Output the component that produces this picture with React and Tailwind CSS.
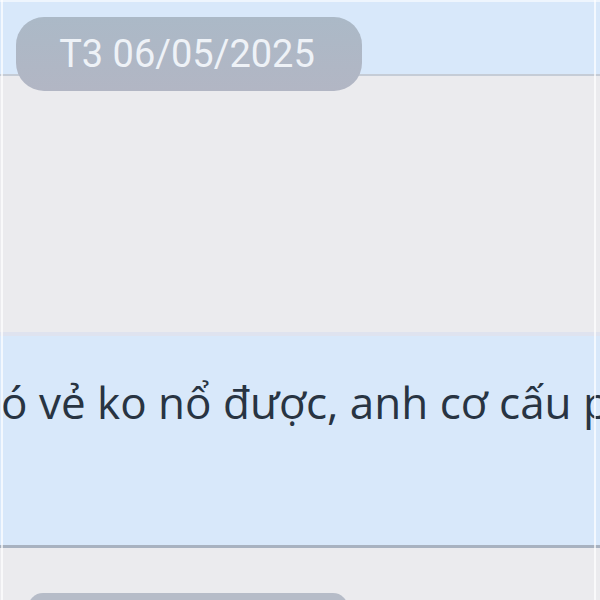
export default function App() {
  return (
    <div className="w-[600px] h-[600px] overflow-hidden relative bg-[#ebebee] flex flex-col" style={{ fontFamily: '"Open Sans", "Noto Sans", sans-serif' }}>
      <div className="h-[76px] shrink-0 bg-[#d8e8fa] border-t-2 border-t-[#eef5fd] border-b-2 border-b-[#c5ccd6]" />
      <div className="h-[256px] shrink-0 bg-[#ebebee]" />
      <div className="h-[216px] shrink-0 bg-[#d8e8fa] border-t-4 border-t-[#dfe3ef] border-b-[3px] border-b-[#a8b2c0] flex items-start pt-[42px] overflow-hidden">
        <span className="whitespace-nowrap text-[44px] leading-[48px] text-[#283442] ml-[1px]">ó vẻ ko nổ được, anh cơ cấu phải</span>
      </div>
      <div className="h-[52px] shrink-0 bg-[#ebebee] pt-[45px] pl-[28px]">
        <div className="w-[320px] h-[30px] rounded-[22px] bg-[#b6bcc8]" />
      </div>
      <div className="absolute left-[16px] top-[17px] w-[346px] h-[74px] rounded-[28px] bg-gradient-to-b from-[#abb9c7] to-[#b2b6c4] flex items-center justify-center">
        <span className="text-[38px] leading-none text-[#eef2f7] pr-[4px]" style={{ fontFamily: 'Roboto, sans-serif' }}>T3 06/05/2025</span>
      </div>
      <div className="absolute left-[1px] top-0 bottom-0 w-[2px] bg-white/70" />
      <div className="absolute right-[4px] top-0 bottom-0 w-[2px] bg-white/70" />
    </div>
  );
}
